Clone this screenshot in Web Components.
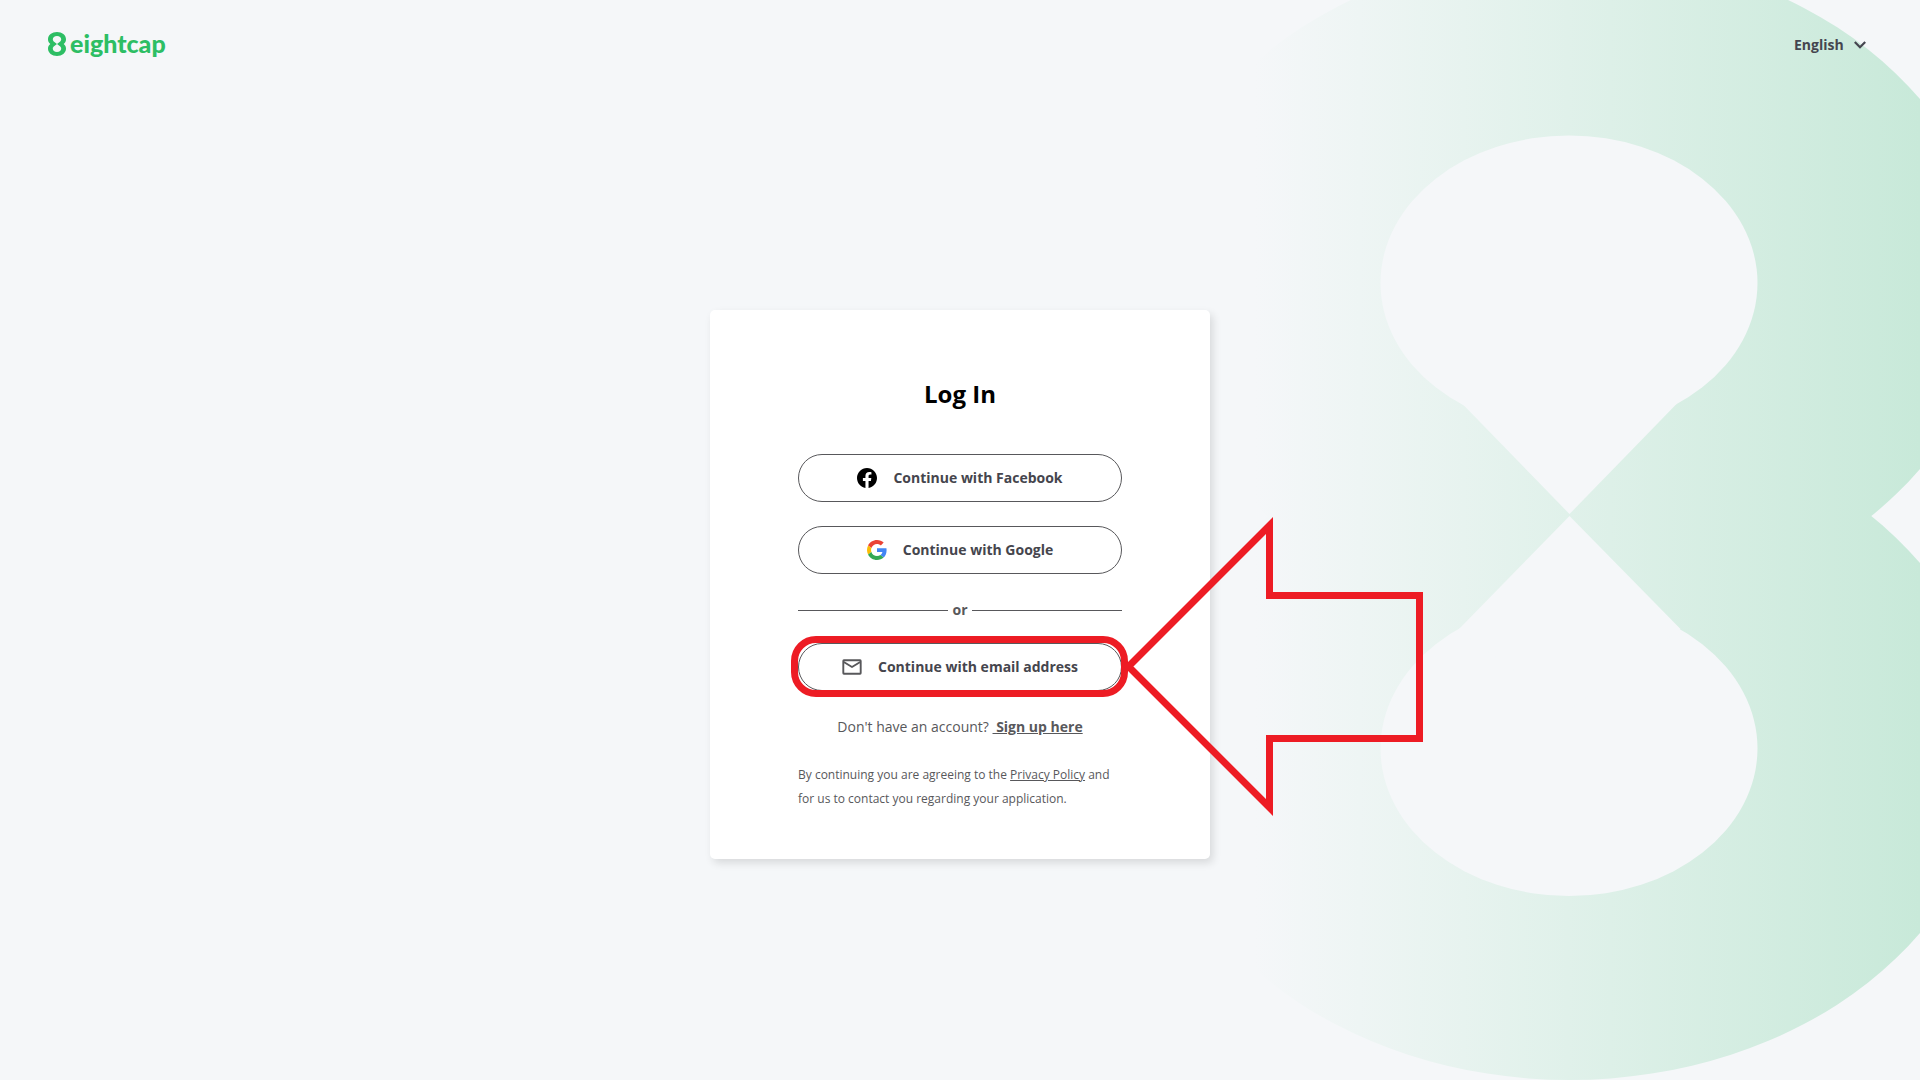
<!DOCTYPE html>
<html lang="en">
<head>
<meta charset="utf-8">
<title>Eightcap – Log In</title>
<style>
  html, body { height: 100%; }
  body { margin: 0; background: #f5f7f9; font-family: "Open Sans", "Noto Sans", sans-serif; color: #58585b; }
</style>
</head>
<body>
<login-page></login-page>

<script>
const define = (name, markup) => {
  const template = document.createElement('template');
  template.innerHTML = markup;
  customElements.define(name, class extends HTMLElement {
    constructor() {
      super();
      this.attachShadow({ mode: 'open' }).append(template.content.cloneNode(true));
    }
  });
};

define('brand-backdrop', `
  <style>
    :host { display: block; position: absolute; inset: 0; overflow: hidden; z-index: -1; }
    svg { display: block; width: 100%; height: 100%; }
  </style>
  <svg viewBox="0 0 1920 1080" preserveAspectRatio="xMaxYMid slice" aria-hidden="true">
    <defs>
      <linearGradient id="fade" gradientUnits="userSpaceOnUse" x1="1255" y1="0" x2="1920" y2="0">
        <stop offset="0" stop-color="#f5f7f9"/>
        <stop offset=".47" stop-color="#e0f1ea"/>
        <stop offset="1" stop-color="#c8e9d9"/>
      </linearGradient>
    </defs>
    <g fill="url(#fade)">
      <ellipse cx="1569.5" cy="284" rx="422" ry="332"/>
      <ellipse cx="1569.5" cy="748" rx="422" ry="332"/>
    </g>
    <g fill="#f5f7f9">
      <ellipse cx="1569" cy="283" rx="188.5" ry="147.5"/>
      <path d="M1462.5 404L1569.5 514L1676.5 404L1569 330Z"/>
      <ellipse cx="1569" cy="748.500" rx="188.5" ry="147.5"/>
      <path d="M1458 630L1569.500 516L1680.500 629L1569 710Z"/>
    </g>
  </svg>
`);

define('brand-logo', `
  <style>
    :host { display: block; }
    a { display: flex; align-items: center; gap: 4px; padding-bottom: 2px; color: #2dbe64; text-decoration: none; }
    svg { display: block; }
    span { font: 900 25px/30px Lato, sans-serif; margin-top: -2px; }
  </style>
  <a href="#" aria-label="eightcap">
    <svg width="18" height="24" viewBox="0 0 18 24" aria-hidden="true">
      <path fill="currentColor" fill-rule="evenodd" d="M9 0C14 0 18 3.100 18 7.200C18 9.200 17.200 10.800 15.700 12C17.200 13.200 18 14.800 18 16.800C18 20.900 14 24 9 24S0 20.900 0 16.800C0 14.800 .8 13.200 2.300 12C.8 10.800 0 9.200 0 7.200C0 3.100 4 0 9 0ZM9 4.100C6.500 4.100 4.800 5.400 4.800 7.300C4.800 8.500 5.400 9.300 6.400 10L9 12L11.600 10C12.600 9.300 13.200 8.500 13.200 7.300C13.200 5.400 11.500 4.100 9 4.100ZM9 12L6.400 14C5.400 14.700 4.800 15.500 4.800 16.700C4.800 18.600 6.500 19.900 9 19.900S13.200 18.600 13.200 16.700C13.200 15.500 12.600 14.700 11.600 14Z"/>
    </svg>
    <span>eightcap</span>
  </a>
`);

define('language-picker', `
  <style>
    :host { display: grid; align-items: center; }
    select, svg { grid-area: 1 / 1; }
    select { appearance: none; border: 0; margin: 0; padding: 0 22px 0 0; background: none; color: #45454f; font: 700 14px/24px "Open Sans", "Noto Sans", sans-serif; cursor: pointer; }
    svg { display: block; justify-self: end; pointer-events: none; }
  </style>
  <select aria-label="Language"><option>English</option></select>
  <svg width="12" height="8" viewBox="0 0 12 8" fill="none" stroke="#45454f" stroke-width="2.200" aria-hidden="true"><path d="M.8 1L6 6.200L11.200 1"/></svg>
`);

define('site-header', `
  <style>
    :host { display: block; }
    header { display: flex; align-items: center; justify-content: space-between; height: 89px; padding: 0 54px 0 48px; box-sizing: border-box; }
  </style>
  <header><brand-logo></brand-logo><language-picker></language-picker></header>
`);

define('pill-button', `
  <style>
    :host { display: block; }
    button { display: flex; align-items: center; justify-content: center; gap: 16px; width: 100%; height: 48px; padding: 0; box-sizing: border-box; border: 1px solid #58585b; border-radius: 24px; background: #fff; color: #45454d; font: 700 14px/24px "Open Sans", "Noto Sans", sans-serif; cursor: pointer; }
    ::slotted(svg) { display: block; width: 20px; height: 20px; }
  </style>
  <button type="button"><slot name="icon"></slot><slot></slot></button>
`);

define('text-divider', `
  <style>
    :host { display: flex; align-items: center; gap: 4px; font-size: 14px; font-weight: 700; line-height: 24px; }
    i { flex: 1; height: 1px; background: #58585b; }
  </style>
  <i></i><slot></slot><i></i>
`);

/* Red marker: a rounded ring round the slotted control and an arrow that points at it. */
define('callout-marker', `
  <style>
    :host { display: block; position: relative; }
    .ring { position: absolute; inset: -7px -6px -6px -7px; border: 7px solid #ed1c24; border-radius: 25px; pointer-events: none; }
    svg { position: absolute; left: 100%; top: 50%; margin: -150px 0 0 0; overflow: visible; pointer-events: none; }
  </style>
  <slot></slot>
  <div class="ring"></div>
  <svg width="302" height="299" viewBox="0 0 302 299" fill="none" stroke="#ed1c24" stroke-width="7" aria-hidden="true">
    <path d="M6.500 149.500L147.500 8.500V78.500H297.500V221.500H147.500V290.500Z"/>
  </svg>
`);

define('login-card', `
  <style>
    :host { display: block; width: 500px; max-width: 100%; box-sizing: border-box; padding: 64px 88px 48px; background: #fff; border-radius: 5px; box-shadow: 3px 4px 8px rgba(0, 0, 0, .12); }
    h1 { margin: 0 0 40px; color: #000; font-size: 24px; line-height: 40px; text-align: center; }
    .social { display: flex; flex-direction: column; gap: 24px; }
    text-divider { margin: 24px 0 21px; }
    p { margin: 24px 0 0; line-height: 24px; }
    a { color: inherit; }
    .signup { font-size: 14px; text-align: center; }
    .signup a { font-weight: 700; }
    .terms { font-size: 12px; }
  </style>
  <h1>Log In</h1>
  <div class="social">
    <pill-button>
      <svg slot="icon" viewBox="0 0 24 24" aria-hidden="true"><path fill="#000" d="M24 12.070C24 5.400 18.630 0 12 0S0 5.400 0 12.070C0 18.100 4.390 23.090 10.130 24v-8.440H7.080v-3.490h3.050V9.410c0-3.020 1.790-4.690 4.530-4.690 1.310 0 2.680.24 2.680.24v2.970h-1.510c-1.490 0-1.960.93-1.960 1.890v2.250h3.330l-.53 3.490h-2.800V24C19.610 23.090 24 18.100 24 12.070z"/></svg>
      Continue with Facebook
    </pill-button>
    <pill-button>
      <svg slot="icon" viewBox="0 0 48 48" aria-hidden="true">
        <path fill="#EA4335" d="M24 9.500c3.540 0 6.710 1.220 9.210 3.600l6.850-6.850C35.900 2.380 30.470 0 24 0 14.620 0 6.510 5.380 2.560 13.220l7.980 6.190C12.430 13.720 17.740 9.500 24 9.500z"/>
        <path fill="#4285F4" d="M46.980 24.550c0-1.570-.15-3.090-.38-4.550H24v9.020h12.940c-.58 2.960-2.260 5.480-4.780 7.180l7.730 6c4.510-4.180 7.090-10.360 7.090-17.650z"/>
        <path fill="#FBBC05" d="M10.530 28.590c-.48-1.450-.76-2.990-.76-4.590s.27-3.140.76-4.590l-7.980-6.190C.92 16.460 0 20.120 0 24c0 3.880.92 7.540 2.560 10.780l7.970-6.190z"/>
        <path fill="#34A853" d="M24 48c6.480 0 11.930-2.130 15.890-5.810l-7.730-6c-2.150 1.450-4.920 2.300-8.160 2.300-6.260 0-11.570-4.220-13.470-9.910l-7.980 6.190C6.510 42.620 14.620 48 24 48z"/>
      </svg>
      Continue with Google
    </pill-button>
  </div>
  <text-divider>or</text-divider>
  <callout-marker>
    <pill-button>
      <svg slot="icon" viewBox="0 0 20 20" fill="none" stroke="#58585b" stroke-width="1.900" stroke-linejoin="round" aria-hidden="true"><rect x="1.300" y="3.300" width="17.400" height="13.400" rx=".6"/><path d="M1.800 5L10 10L18.200 5"/></svg>
      Continue with email address
    </pill-button>
  </callout-marker>
  <p class="signup">Don't have an account? <a href="#">&nbsp;Sign up here</a></p>
  <p class="terms">By continuing you are agreeing to the <a href="#">Privacy Policy</a> and<br>for us to contact you regarding your application.</p>
`);

define('login-page', `
  <style>
    :host { display: flex; flex-direction: column; position: relative; min-height: 100%; isolation: isolate; overflow: hidden; }
    main { flex: 1; display: flex; align-items: center; justify-content: center; }
  </style>
  <brand-backdrop></brand-backdrop>
  <site-header></site-header>
  <main><login-card></login-card></main>
`);
</script>
</body>
</html>
